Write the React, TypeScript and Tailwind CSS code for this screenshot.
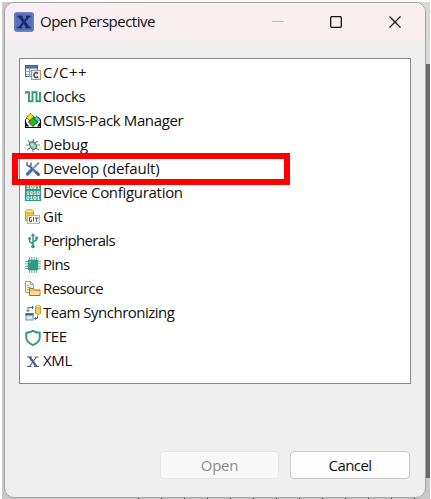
import type { ReactNode } from 'react';

const GREEN = '#2f9a80';

function Svg({ children }: { children: ReactNode }) {
  return (
    <svg width="16" height="16" viewBox="0 0 16 16" fill="none" className="shrink-0">
      {children}
    </svg>
  );
}

const CppIcon = () => (
  <Svg>
    <rect x=".5" y=".5" width="12" height="11" fill="#eef3fa" stroke="#4a6fa5" />
    <path d="M.5 .5h12v2.500H.5z" fill="#4f7fc0" stroke="#34629f" />
    <path d="M1 6.500h6M1 9.500h5M4.500 3v9" stroke="#8ba9cf" />
    <rect x="6.500" y="5.500" width="9" height="9" fill="#f5ead2" stroke="#b29968" />
    <path d="M13 8.500C11.500 7 9 7.500 9 10s2.500 3 4 1.700" stroke="#2a5caa" strokeWidth="1.700" />
  </Svg>
);
const ClocksIcon = () => (
  <Svg>
    <path d="M0 5V3.300h4v9h3.500v-9h4v9H15V3" stroke={GREEN} strokeWidth="1.900" />
  </Svg>
);
const CmsisIcon = () => (
  <Svg>
    <path d="M.5 6.500L3 4.500h10l2.500 2v8H.5z" fill="#fff" stroke="#111" />
    <path d="M1 13.500V9l3 4.500zM15 13.500V9l-3 4.500z" fill="#111" />
    <path d="M5.500 .5L9.500 4.500 5.500 8.500 1.500 4.500z" fill="#f0e800" stroke="#222" strokeDasharray="1 1" />
    <path d="M11.500 3L15 6.500 11.500 10.500 8 6.500z" fill="#38dce8" stroke="#222" strokeDasharray="1 1" />
    <path d="M8 4.500l4.500 4.500L8 13.500 3.500 9z" fill="#16c516" stroke="#111" strokeWidth=".8" />
    <path d="M0 14.500h16" stroke="#111" />
  </Svg>
);
const DebugIcon = () => (
  <Svg>
    <path d="M5 6L3 3M8 5l.5-3M10 6l3-2M5 8H1M5 11l-3 2M8 12v3M11 11l3 2M11 8h4" stroke="#5f9387" strokeWidth="1.200" />
    <ellipse cx="8" cy="8.500" rx="3" ry="4" transform="rotate(-35 8 8.500)" fill="#9cc5a2" stroke="#39827a" />
    <path d="M6 6.500l4 4" stroke="#d6e8b6" strokeWidth="1.300" />
  </Svg>
);
const DevelopIcon = () => (
  <Svg>
    <path d="M4.500 5l8 8" stroke="#5b6b80" strokeWidth="2.300" />
    <path d="M2 1v3L4 5.500 6 4V1.500" stroke="#65768d" strokeWidth="1.600" />
    <path d="M14 1.500L6.500 9" stroke="#8392a6" strokeWidth="2" />
    <path d="M7 8.500L2.500 13" stroke="#3b73c7" strokeWidth="3.200" strokeLinecap="round" />
    <path d="M11.500 11.500l2 2" stroke="#4d5d73" strokeWidth="3" strokeLinecap="round" />
  </Svg>
);
const DeviceIcon = () => (
  <Svg>
    <rect width="16" height="16" fill={GREEN} />
    <g fill="#fff" fontFamily="'Liberation Mono', monospace" fontSize="4.500" fontWeight="700">
      <text x="1" y="4.300" textLength="14" lengthAdjust="spacingAndGlyphs">1001</text>
      <text x="1" y="9.500" textLength="14" lengthAdjust="spacingAndGlyphs">1010</text>
      <text x="1" y="14.700" textLength="14" lengthAdjust="spacingAndGlyphs">0101</text>
    </g>
  </Svg>
);
const GitIcon = () => (
  <Svg>
    <path d="M.5 2.500v9c0 1 8 1 8 0v-9z" fill="#f2c83f" stroke="#c99c35" />
    <ellipse cx="4.500" cy="2.300" rx="4" ry="1.700" fill="#ffe683" stroke="#c9a53f" />
    <rect x="2.500" y="6.500" width="12" height="8" fill="#fafafa" stroke="#b4b3a8" />
    <path d="M6.500 8.500H4.500v4h2V11M8.500 8.500v4M10 9h3.500M11.700 9v4" stroke="#444" strokeWidth=".9" />
    <path d="M6 11h1M8 8.500h1" stroke="#cf4638" />
  </Svg>
);
const PeripheralsIcon = () => (
  <Svg>
    <path d="M8 2v12M8 11L4.500 8.500V6M8 9l3.500-2V5" stroke={GREEN} strokeWidth="1.500" />
    <path d="M8 0l2.200 3.200H5.800z" fill={GREEN} />
    <rect x="3.300" y="4" width="2.500" height="3" rx="1" fill={GREEN} />
    <rect x="10.300" y="3.500" width="2.500" height="3" fill={GREEN} />
    <circle cx="8" cy="13.500" r="1.800" fill={GREEN} />
  </Svg>
);
const PinsIcon = () => (
  <Svg>
    <path d="M4.500 0v16M6.800 0v16M9.200 0v16M11.500 0v16M0 4.500h16M0 6.800h16M0 9.200h16M0 11.500h16" stroke="#6db5a3" strokeWidth="1.100" />
    <rect x="2.800" y="2.800" width="10.400" height="10.400" rx=".5" fill={GREEN} />
    <circle cx="5" cy="5" r=".7" fill="#bfe4d9" />
  </Svg>
);
const ResourceIcon = () => (
  <Svg>
    <path d="M.5 .5h5l3 3v8h-8z" fill="#faf3df" stroke="#b59c69" />
    <path d="M5.500 .5v3h3M2 4.500h2M2 6.500h4M2 8.500h3" stroke="#9da5b4" />
    <path d="M4.500 14.500v-7h4l1 1.500h5.500v5.500z" fill="#f0c374" stroke="#a76d30" />
    <path d="M5 14V10h9.500v4z" fill="#ffdc87" />
  </Svg>
);
const TeamIcon = () => (
  <Svg>
    <path d="M3 6.500V2.500h5M1.500 5L3 6.500 4.500 5M7 1l1.500 1.500L7 4M12.500 10.500v3H10M11 12l-1.500 1.500L11 15" stroke="#426caa" />
    <path d="M10.500 1.500v7c0 1 5 1 5 0v-7z" fill="#f8d052" stroke="#c19834" />
    <ellipse cx="13" cy="1.700" rx="2.500" ry="1.200" fill="#ffec9c" stroke="#c39a3a" strokeWidth=".7" />
    <rect x="1" y="8.500" width="7" height="6.500" fill="#dbecf4" stroke="#7c8ea0" />
    <path d="M.5 9.500h8" stroke="#3d628c" strokeWidth="2" />
  </Svg>
);
const TeeIcon = () => (
  <Svg>
    <path d="M8 .8C6 2.300 4 2.800 1.300 2.800v5c0 3.500 3 5.700 6.700 7.300 3.700-1.600 6.700-3.800 6.700-7.300v-5C12 2.800 10 2.300 8 .8z" stroke={GREEN} strokeWidth="1.900" />
  </Svg>
);
const XmlIcon = () => (
  <Svg>
    <path d="M4.500 3l7 9.500" stroke="#4b6387" strokeWidth="2.200" />
    <path d="M11.500 3l-7 9.500M2 3h5M9.500 3h4M2 12.500h4.500M9 12.500h5" stroke="#4b6387" strokeWidth="1.100" />
  </Svg>
);

const perspectives = [
  { name: 'C/C++', Icon: CppIcon, tracking: 'tracking-[0.5px]' },
  { name: 'Clocks', Icon: ClocksIcon, tracking: 'tracking-[-0.35px]' },
  { name: 'CMSIS-Pack Manager', Icon: CmsisIcon, tracking: 'tracking-[-0.36px]' },
  { name: 'Debug', Icon: DebugIcon, tracking: 'tracking-[-0.2px]' },
  { name: 'Develop (default)', Icon: DevelopIcon, tracking: 'tracking-[-0.16px]' },
  { name: 'Device Configuration', Icon: DeviceIcon, tracking: 'tracking-[-0.3px]' },
  { name: 'Git', Icon: GitIcon, tracking: 'tracking-[-0.2px]' },
  { name: 'Peripherals', Icon: PeripheralsIcon, tracking: 'tracking-[-0.7px]' },
  { name: 'Pins', Icon: PinsIcon, tracking: 'tracking-[-0.7px]' },
  { name: 'Resource', Icon: ResourceIcon, tracking: 'tracking-[-0.6px]' },
  { name: 'Team Synchronizing', Icon: TeamIcon, tracking: 'tracking-[-0.5px]' },
  { name: 'TEE', Icon: TeeIcon, tracking: 'tracking-[-0.45px]' },
  { name: 'XML', Icon: XmlIcon, tracking: 'tracking-[-0.3px]' },
];

export default function App() {
  return (
    <div className="h-[499px] w-[431px] overflow-hidden bg-white pt-[2px] pr-px pl-[2px] font-['Open_Sans','Noto_Sans',sans-serif] text-[15px] text-[#101010]">
      <div className="h-[497px] bg-[linear-gradient(to_right,#c9c9c9_12px,transparent_12px),linear-gradient(to_bottom,#d9d9d9_62px,#696b6b_62px,#696b6b_476px,#c9c9c9_476px)] pr-[4px] pl-[2px]">
        <div className="flex h-[496px] flex-col overflow-hidden rounded-[10px] border border-[#a3a3a3] bg-[#efefef]">
          <header className="flex h-[37px] shrink-0 items-center bg-gradient-to-r from-[#f8eef4] via-[#f9efee] to-[#f9efee] pl-[9px]">
            <svg width="20" height="20" viewBox="0 0 20 20" fill="none">
              <rect x=".7" y=".7" width="18.600" height="18.600" rx="2" fill="#566fb8" stroke="#7183b3" strokeWidth="1.400" />
              <path d="M3.500 4.500h5M12 4.500h4.500M3.500 15.500H8M11.500 15.500h5" stroke="#132b6f" strokeWidth="1.500" />
              <path d="M6 4.500l8 11" stroke="#132b6f" strokeWidth="3" />
              <path d="M14.500 4.500l-9 11" stroke="#132b6f" strokeWidth="2" />
            </svg>
            <h1 className="ml-[6px] grow text-[15px] font-normal tracking-[-0.5px]">Open Perspective</h1>
            <svg width="130" height="14" viewBox="0 0 130 14" fill="none" className="mr-[23px]">
              <path d="M0 6.500h12" stroke="#c3bcbc" />
              <rect x="58.700" y="1.700" width="10.600" height="10.600" rx="1" stroke="#111" strokeWidth="1.300" />
              <path d="M117.500 1.500l11 11M128.500 1.500l-11 11" stroke="#111" strokeWidth="1.200" />
            </svg>
          </header>
          <main className="relative mt-[18px] mr-[14px] ml-[14px] h-[326px] shrink-0 border border-[#858994] bg-white pt-[2px]">
            <ul>
              {perspectives.map(({ name, Icon, tracking }) => (
                <li key={name} className="flex h-[24.050px] items-center gap-[2px] pl-[5px] leading-none">
                  <Icon />
                  <span className={`pb-[2px] whitespace-nowrap ${tracking}`}>{name}</span>
                </li>
              ))}
            </ul>
            <div className="absolute top-[94px] left-[-8px] h-[32px] w-[278px] border-[6px] border-[#ff0000]" />
          </main>
          <footer className="mt-[67px] mr-[15px] flex justify-end gap-[11px]">
            <button className="h-[28px] w-[119px] rounded-[4px] border border-[#e7e7e7] bg-[#f8f8f8] tracking-[-0.3px] text-[#8d8d8d]" disabled>
              Open
            </button>
            <button className="h-[28px] w-[120px] rounded-[4px] border border-[#cacaca] bg-[#fdfdfd] tracking-[-0.6px]">Cancel</button>
          </footer>
        </div>
        <div className="ml-[134px] h-px bg-[repeating-linear-gradient(to_right,#333_0,#333_1px,#c9c9c9_1px,#c9c9c9_23px)]" />
      </div>
    </div>
  );
}
